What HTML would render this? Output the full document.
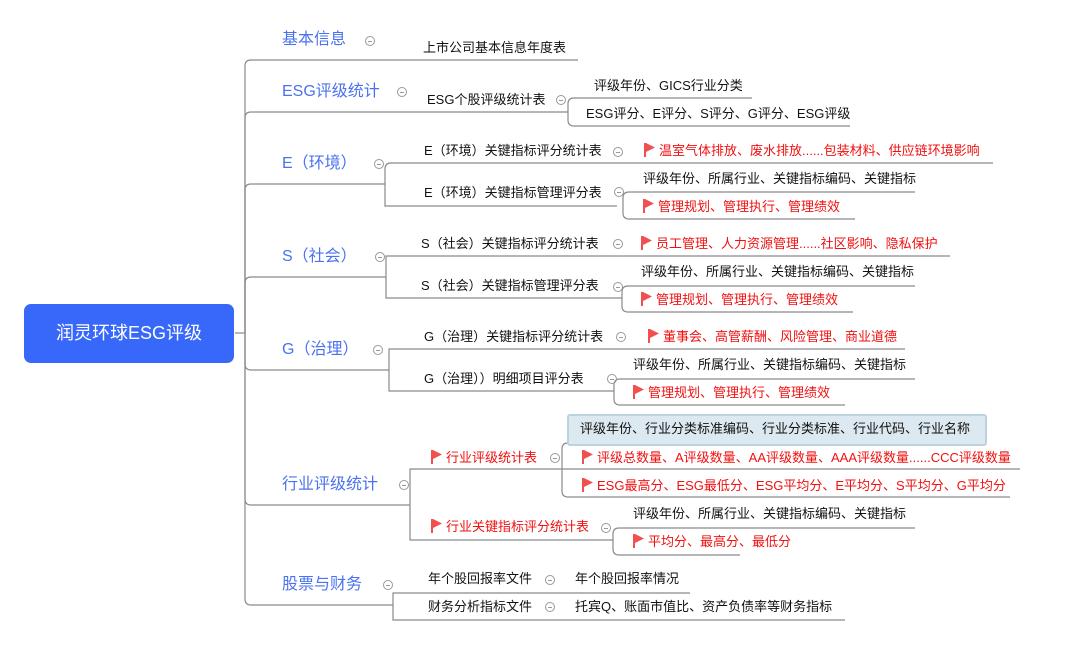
<!DOCTYPE html>
<html><head><meta charset="utf-8"><style>
body{margin:0;width:1077px;height:645px;background:#fff;position:relative;overflow:hidden;font-family:"Liberation Sans","Noto Sans CJK SC",sans-serif;}
.t{position:absolute;font-size:13px;line-height:18px;color:#111;white-space:nowrap;}
.c{position:absolute;font-size:16px;line-height:22px;color:#4a72f0;white-space:nowrap;}
.r{color:#f01010;}
.o{position:absolute;width:8px;height:8px;border:1px solid #999;border-radius:50%;}
.o:after{content:"";position:absolute;left:2px;top:3.5px;width:4px;height:1px;background:#999;}
.f{display:inline-block;width:11px;height:14px;vertical-align:-2px;margin-right:4px;}
svg.l{position:absolute;left:0;top:0;}
</style></head><body>
<svg class="l" width="1077" height="645" fill="none" stroke="#8a8a8a" stroke-width="1.2">
<path d="M235,333H245"/>
<path d="M245,333V66Q245,60 251,60H578"/>
<path d="M245,333V118Q245,112 251,112H568"/>
<path d="M568,112V104Q568,98 574,98H752M568,112V120Q568,126 574,126H850"/>
<path d="M245,333V190Q245,184 251,184H385"/>
<path d="M385,184V169Q385,163 391,163H993M385,184V206H617"/>
<path d="M623,206V198Q623,192 629,192H915M623,206V213Q623,219 629,219H855"/>
<path d="M245,333V283Q245,277 251,277H386"/>
<path d="M386,277V256H950M386,277V298H622"/>
<path d="M622,298V292Q622,286 628,286H915M622,298V306Q622,312 628,312H853"/>
<path d="M245,333V364Q245,370 251,370H389"/>
<path d="M389,370V349H905M389,370V391H614"/>
<path d="M614,391V385Q614,379 620,379H915M614,391V399Q614,405 620,405H845"/>
<path d="M245,333V499Q245,505 251,505H410"/>
<path d="M410,505V469H562M410,505V540H613"/>
<path d="M562,469V449Q562,443 568,443M562,469H1020M562,469V491Q562,497 568,497H1010"/>
<path d="M613,540V534Q613,528 619,528H915M613,540V549Q613,555 619,555H740"/>
<path d="M245,333V599Q245,605 251,605H393"/>
<path d="M393,605V593H690M393,605V620H845"/>
</svg>
<div style="position:absolute;left:24px;top:304px;width:210px;height:59px;background:#3868fa;border-radius:7px;color:#fff;font-size:18px;line-height:59px;text-align:center;">润灵环球ESG评级</div>
<div style="position:absolute;left:567px;top:414px;width:416px;height:28px;background:#dde9f0;border:2px solid #bcd3df;border-radius:3px;"></div>

<div class="c" style="left:282px;top:29px">基本信息</div>
<div class="c" style="left:282px;top:81px">ESG评级统计</div>
<div class="c" style="left:282px;top:153px">E（环境）</div>
<div class="c" style="left:282px;top:246px">S（社会）</div>
<div class="c" style="left:282px;top:339px">G（治理）</div>
<div class="c" style="left:282px;top:474px">行业评级统计</div>
<div class="c" style="left:282px;top:574px">股票与财务</div>

<div class="o" style="left:365px;top:36px"></div>
<div class="o" style="left:397px;top:87px"></div>
<div class="o" style="left:374px;top:159px"></div>
<div class="o" style="left:375px;top:252px"></div>
<div class="o" style="left:373px;top:345px"></div>
<div class="o" style="left:399px;top:480px"></div>
<div class="o" style="left:383px;top:580px"></div>
<div class="o" style="left:556px;top:95px"></div>
<div class="o" style="left:614px;top:187px"></div>
<div class="o" style="left:613px;top:282px"></div>
<div class="o" style="left:607px;top:374px"></div>
<div class="o" style="left:550px;top:453px"></div>
<div class="o" style="left:601px;top:523px"></div>
<div class="o" style="left:545px;top:575px"></div>
<div class="o" style="left:545px;top:602px"></div>
<div class="o" style="left:613px;top:147px"></div>
<div class="o" style="left:613px;top:239px"></div>
<div class="o" style="left:616px;top:332px"></div>

<div class="t" style="left:423px;top:39px">上市公司基本信息年度表</div>
<div class="t" style="left:427px;top:91px">ESG个股评级统计表</div>
<div class="t" style="left:594px;top:77px">评级年份、GICS行业分类</div>
<div class="t" style="left:586px;top:105px">ESG评分、E评分、S评分、G评分、ESG评级</div>

<div class="t" style="left:424px;top:142px">E（环境）关键指标评分统计表</div>
<div class="t r" style="left:644px;top:142px"><svg class="f" viewBox="0 0 11 14"><path d="M1,0V14" stroke="#f05050" stroke-width="2"/><path d="M2,0L11,4.5L2,9Z" fill="#f05050"/></svg>温室气体排放、废水排放......包装材料、供应链环境影响</div>
<div class="t" style="left:424px;top:184px">E（环境）关键指标管理评分表</div>
<div class="t" style="left:643px;top:170px">评级年份、所属行业、关键指标编码、关键指标</div>
<div class="t r" style="left:643px;top:198px"><svg class="f" viewBox="0 0 11 14"><path d="M1,0V14" stroke="#f05050" stroke-width="2"/><path d="M2,0L11,4.5L2,9Z" fill="#f05050"/></svg>管理规划、管理执行、管理绩效</div>

<div class="t" style="left:421px;top:235px">S（社会）关键指标评分统计表</div>
<div class="t r" style="left:641px;top:235px"><svg class="f" viewBox="0 0 11 14"><path d="M1,0V14" stroke="#f05050" stroke-width="2"/><path d="M2,0L11,4.5L2,9Z" fill="#f05050"/></svg>员工管理、人力资源管理......社区影响、隐私保护</div>
<div class="t" style="left:421px;top:277px">S（社会）关键指标管理评分表</div>
<div class="t" style="left:641px;top:263px">评级年份、所属行业、关键指标编码、关键指标</div>
<div class="t r" style="left:641px;top:291px"><svg class="f" viewBox="0 0 11 14"><path d="M1,0V14" stroke="#f05050" stroke-width="2"/><path d="M2,0L11,4.5L2,9Z" fill="#f05050"/></svg>管理规划、管理执行、管理绩效</div>

<div class="t" style="left:424px;top:328px">G（治理）关键指标评分统计表</div>
<div class="t r" style="left:648px;top:328px"><svg class="f" viewBox="0 0 11 14"><path d="M1,0V14" stroke="#f05050" stroke-width="2"/><path d="M2,0L11,4.5L2,9Z" fill="#f05050"/></svg>董事会、高管薪酬、风险管理、商业道德</div>
<div class="t" style="left:424px;top:370px">G（治理））明细项目评分表</div>
<div class="t" style="left:633px;top:356px">评级年份、所属行业、关键指标编码、关键指标</div>
<div class="t r" style="left:633px;top:384px"><svg class="f" viewBox="0 0 11 14"><path d="M1,0V14" stroke="#f05050" stroke-width="2"/><path d="M2,0L11,4.5L2,9Z" fill="#f05050"/></svg>管理规划、管理执行、管理绩效</div>

<div class="t r" style="left:431px;top:449px"><svg class="f" viewBox="0 0 11 14"><path d="M1,0V14" stroke="#f05050" stroke-width="2"/><path d="M2,0L11,4.5L2,9Z" fill="#f05050"/></svg>行业评级统计表</div>
<div class="t" style="left:580px;top:420px">评级年份、行业分类标准编码、行业分类标准、行业代码、行业名称</div>
<div class="t r" style="left:582px;top:449px"><svg class="f" viewBox="0 0 11 14"><path d="M1,0V14" stroke="#f05050" stroke-width="2"/><path d="M2,0L11,4.5L2,9Z" fill="#f05050"/></svg>评级总数量、A评级数量、AA评级数量、AAA评级数量......CCC评级数量</div>
<div class="t r" style="left:582px;top:477px"><svg class="f" viewBox="0 0 11 14"><path d="M1,0V14" stroke="#f05050" stroke-width="2"/><path d="M2,0L11,4.5L2,9Z" fill="#f05050"/></svg>ESG最高分、ESG最低分、ESG平均分、E平均分、S平均分、G平均分</div>
<div class="t r" style="left:431px;top:518px"><svg class="f" viewBox="0 0 11 14"><path d="M1,0V14" stroke="#f05050" stroke-width="2"/><path d="M2,0L11,4.5L2,9Z" fill="#f05050"/></svg>行业关键指标评分统计表</div>
<div class="t" style="left:633px;top:505px">评级年份、所属行业、关键指标编码、关键指标</div>
<div class="t r" style="left:633px;top:533px"><svg class="f" viewBox="0 0 11 14"><path d="M1,0V14" stroke="#f05050" stroke-width="2"/><path d="M2,0L11,4.5L2,9Z" fill="#f05050"/></svg>平均分、最高分、最低分</div>

<div class="t" style="left:428px;top:570px">年个股回报率文件</div>
<div class="t" style="left:575px;top:570px">年个股回报率情况</div>
<div class="t" style="left:428px;top:598px">财务分析指标文件</div>
<div class="t" style="left:575px;top:598px">托宾Q、账面市值比、资产负债率等财务指标</div>
</body></html>
